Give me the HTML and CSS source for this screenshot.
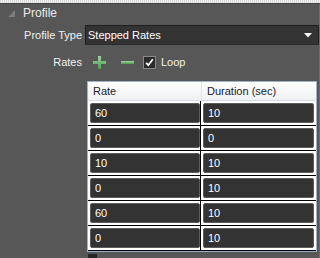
FILE: index.html
```html
<!DOCTYPE html>
<html lang="en">
<head>
    <meta charset="UTF-8">
    <title>Profile</title>
    <link rel="stylesheet" href="styles.css">
</head>
<body>
    <div class="strip"></div>
    <div class="panel">
        <div class="group-head">
            <svg class="expander" width="8" height="8" viewBox="0 0 8 8"><polygon points="7,0 7,7 0,7" fill="#7c7c7c"/></svg>
            <span>Profile</span>
        </div>

        <div class="field">
            <span class="field-label">Profile Type</span>
            <div class="combo">
                <span>Stepped Rates</span>
                <svg class="combo-arrow" width="8" height="5" viewBox="0 0 8 5"><polygon points="0,0 8,0 4,4.5" fill="#f4f4f4"/></svg>
            </div>
        </div>

        <div class="field rates">
            <span class="field-label">Rates</span>
            <svg class="icon-plus" width="13" height="13" viewBox="0 0 13 13">
                <defs>
                    <linearGradient id="g1" x1="0" y1="0" x2="0" y2="1">
                        <stop offset="0" stop-color="#9fd49f"/>
                        <stop offset="1" stop-color="#4f9a55"/>
                    </linearGradient>
                </defs>
                <path d="M5 0h3v5h5v3H8v5H5V8H0V5h5z" fill="url(#g1)"/>
            </svg>
            <svg class="icon-minus" width="13" height="13" viewBox="0 0 13 13">
                <rect x="0" y="5" width="13" height="3" fill="url(#g1)"/>
            </svg>
            <span class="check">
                <svg width="9" height="9" viewBox="0 0 9 9"><path d="M1.2 4.8l2.2 2.4L7.8 1.2" fill="none" stroke="#fff" stroke-width="1.8"/></svg>
            </span>
            <span class="check-label">Loop</span>
        </div>

        <div class="rate-table">
            <div class="th">Rate</div>
            <div class="th">Duration (sec)</div>

            <div class="td"><div class="box">60</div></div>
            <div class="td"><div class="box">10</div></div>
            <div class="td"><div class="box">0</div></div>
            <div class="td"><div class="box">0</div></div>
            <div class="td"><div class="box">10</div></div>
            <div class="td"><div class="box">10</div></div>
            <div class="td"><div class="box">0</div></div>
            <div class="td"><div class="box">10</div></div>
            <div class="td"><div class="box">60</div></div>
            <div class="td"><div class="box">10</div></div>
            <div class="td"><div class="box">0</div></div>
            <div class="td"><div class="box">10</div></div>
        </div>

        <div class="next-check"></div>
    </div>
</body>
</html>
```

FILE: styles.css
```css
body {
    margin: 0;
    background: #575757;
    font-family: "Liberation Sans", Arial, sans-serif;
    font-size: 11px;
    color: #f2f2f2;
    overflow: hidden;
}

.strip {
    height: 3px;
    background: repeating-linear-gradient(90deg, #d8d8d8 0 1px, #f2f2f2 1px 2px);
    border-bottom: 1px solid #454545;
}

.panel {
    height: 254px;
    border-right: 1px solid #6c6c6c;
    overflow: hidden;
}

.group-head {
    height: 18px;
    display: flex;
    align-items: center;
    font-size: 12px;
    color: #ececec;
}

.expander {
    margin: 1px 7px 0 8px;
}

.field {
    display: flex;
    align-items: center;
    margin-top: 3px;
}

.field-label {
    width: 82px;
    text-align: right;
    flex: none;
}

.combo {
    flex: 1;
    height: 20px;
    margin-left: 3px;
    box-sizing: border-box;
    background: #333333;
    border: 1px solid #1f1f1f;
    border-bottom-color: #2a2a2a;
    display: flex;
    align-items: center;
    padding-left: 2px;
    color: #fff;
}

.combo-arrow {
    margin-left: auto;
    margin-right: 6px;
}

.rates {
    margin-top: 10px;
    height: 14px;
}

.icon-plus {
    margin-left: 11px;
}

.icon-minus {
    margin-left: 15px;
}

.check {
    width: 13px;
    height: 13px;
    box-sizing: border-box;
    margin-left: 9px;
    background: #2b2b2b;
    border: 1px solid #8a8a8a;
    display: flex;
    align-items: center;
    justify-content: center;
}

.check-label {
    margin-left: 5px;
}

.rate-table {
    margin: 12px 0 0 87px;
    width: 230px;
    box-sizing: border-box;
    border: 1px solid #9fb2cc;
    background: #fff;
    display: grid;
    grid-template-columns: 113px 115px;
    color: #000;
}

.th {
    height: 19px;
    box-sizing: border-box;
    padding: 3px 0 0 5px;
    background: linear-gradient(#ffffff, #f0f1f3);
    border-bottom: 1px solid #d6dce4;
    color: #1a1a2a;
}

.th + .th {
    border-left: 1px solid #e2e4e8;
    padding-left: 5px;
}

.td {
    padding: 2px 2px 2px 2px;
    border-bottom: 1px solid #000;
}

.td:nth-child(odd) {
    padding-right: 0;
    border-right: 1px solid #000;
}

.box {
    height: 20px;
    box-sizing: border-box;
    background: #333333;
    border: 1px solid #5c5c5c;
    border-radius: 2px;
    padding: 3px 0 0 4px;
    color: #fff;
}

.next-check {
    width: 9px;
    height: 4px;
    margin: 2px 0 0 88px;
    background: #262626;
}
```
